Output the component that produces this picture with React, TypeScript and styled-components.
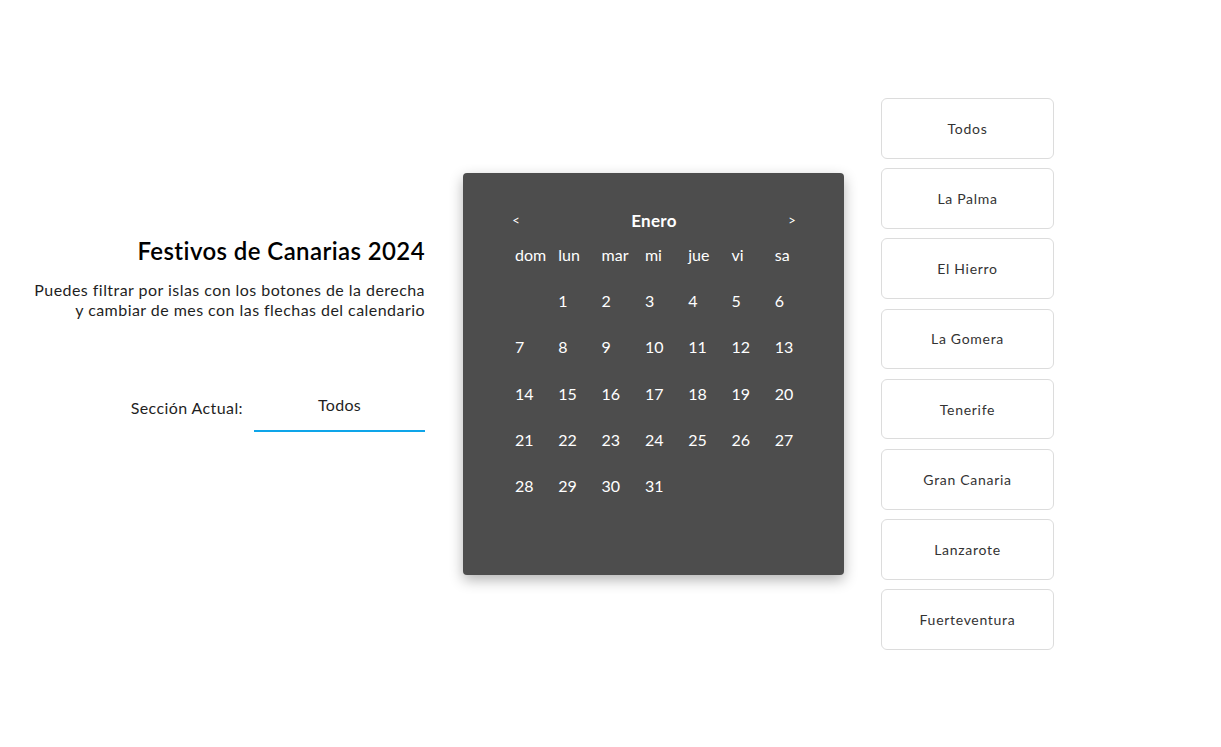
import styled, { createGlobalStyle } from 'styled-components'

const GlobalStyle = createGlobalStyle`
  body {
    margin: 0;
    background: #ffffff;
    font-family: 'Lato', 'Liberation Sans', sans-serif;
    color: #1f1f1f;
  }
`

const islands = [
  'Todos',
  'La Palma',
  'El Hierro',
  'La Gomera',
  'Tenerife',
  'Gran Canaria',
  'Lanzarote',
  'Fuerteventura',
]

const weekDays = ['dom', 'lun', 'mar', 'mi', 'jue', 'vi', 'sa']

// enero 2024 empieza en lunes
const days: (number | null)[] = [null, ...Array.from({ length: 31 }, (_, i) => i + 1)]

export default function App() {
  return (
    <>
      <GlobalStyle />
      <Page>
        <Intro>
          <Title>Festivos de Canarias 2024</Title>
          <Description>
            Puedes filtrar por islas con los botones de la derecha
            <br />
            y cambiar de mes con las flechas del calendario
          </Description>
          <SectionRow>
            <SectionLabel>Sección Actual:</SectionLabel>
            <SectionValue>Todos</SectionValue>
          </SectionRow>
        </Intro>

        <Calendar>
          <CalendarHeader>
            <Arrow>&lt;</Arrow>
            <Month>Enero</Month>
            <Arrow>&gt;</Arrow>
          </CalendarHeader>
          <Grid>
            {weekDays.map((d) => (
              <Cell key={d}>{d}</Cell>
            ))}
            {days.map((d, i) => (
              <Cell key={i}>{d ?? ''}</Cell>
            ))}
          </Grid>
        </Calendar>

        <IslandList>
          {islands.map((name) => (
            <IslandButton key={name}>{name}</IslandButton>
          ))}
        </IslandList>
      </Page>
    </>
  )
}

const Page = styled.main`
  display: flex;
  flex-direction: row;
  align-items: flex-start;
  padding-top: 98px;
`

const Intro = styled.section`
  margin-top: 137px;
  width: 425px;
  flex-shrink: 0;
  display: flex;
  flex-direction: column;
  align-items: flex-end;
  text-align: right;
  margin-right: 38px;
`

const Title = styled.h1`
  margin: 0;
  font-size: 24px;
  line-height: 32px;
  font-weight: 600;
  letter-spacing: 0.4px;
  color: #000;
`

const Description = styled.p`
  margin: 13px 0 0;
  font-size: 16px;
  line-height: 20px;
  letter-spacing: 0.45px;
  color: #1f1f1f;
`

const SectionRow = styled.div`
  display: flex;
  flex-direction: row;
  align-items: center;
  gap: 11px;
  margin-top: 62px;
`

const SectionLabel = styled.span`
  font-size: 16px;
  letter-spacing: 0.4px;
  color: #1f1f1f;
`

const SectionValue = styled.div`
  width: 171px;
  text-align: center;
  font-size: 16px;
  line-height: 20px;
  letter-spacing: 0.3px;
  padding: 13px 0 15px;
  border-bottom: 2px solid #0ea5e9;
  color: #1f1f1f;
`

const Calendar = styled.section`
  width: 381px;
  height: 402px;
  box-sizing: border-box;
  flex-shrink: 0;
  margin-top: 75px;
  background: #4d4d4d;
  border-radius: 4px;
  box-shadow: 0 5px 14px rgba(0, 0, 0, 0.3);
  color: #ffffff;
  padding: 36px 0 0 48px;
  margin-right: 37px;
`

const CalendarHeader = styled.div`
  width: 286px;
  height: 22px;
  display: flex;
  align-items: center;
  justify-content: space-between;
`

const Arrow = styled.span`
  font-size: 13px;
  width: 10px;
  text-align: center;
`

const Month = styled.span`
  font-size: 17px;
  font-weight: 700;
  letter-spacing: 0.3px;
`

const Grid = styled.div`
  display: grid;
  grid-template-columns: repeat(7, 43.3px);
  grid-auto-rows: 46.3px;
  margin-left: 4px;
`

const Cell = styled.div`
  display: flex;
  align-items: center;
  font-size: 16px;
`

const IslandList = styled.nav`
  display: flex;
  flex-direction: column;
  gap: 9.6px;
  width: 173px;
  flex-shrink: 0;
`

const IslandButton = styled.button`
  height: 60.6px;
  background: #ffffff;
  border: 1px solid #dcdcdc;
  border-radius: 6px;
  font-family: inherit;
  font-size: 14px;
  letter-spacing: 0.7px;
  color: #333;
  cursor: pointer;
`
